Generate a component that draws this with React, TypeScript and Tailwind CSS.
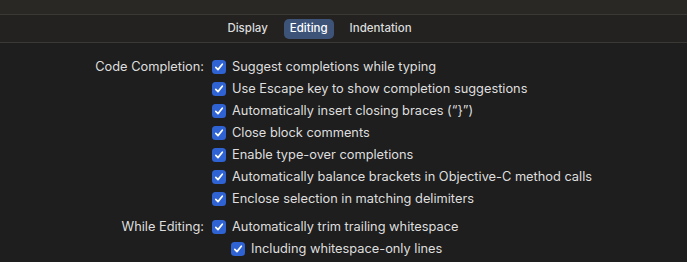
import React from "react";

const Check = () => (
  <div className="w-[14px] h-[14px] rounded-[3.5px] bg-[#2f62d3] flex items-center justify-center shrink-0">
    <svg width="10" height="10" viewBox="0 0 10 10" fill="none">
      <path d="M1.8 5.3 L4 7.6 L8.3 2.2" stroke="white" strokeWidth="1.7" strokeLinecap="round" strokeLinejoin="round" />
    </svg>
  </div>
);

const Row = ({ label, text, indent }: { label?: string; text: string; indent?: boolean }) => (
  <div className="flex items-center h-[22px]">
    <div className="w-[212px] pr-[8px] text-right shrink-0">{label}</div>
    <div className={`flex items-center gap-[6px] ${indent ? "pl-[19px]" : ""}`}>
      <Check />
      <span>{text}</span>
    </div>
  </div>
);

export default function App() {
  return (
    <div
      className="w-[687px] h-[262px] bg-[#1e1e1e] text-[#dedede] text-[12.8px] overflow-hidden"
      style={{ fontFamily: "Inter, 'Helvetica Neue', Arial, sans-serif" }}
    >
      <div className="h-[15px] bg-[#292825] border-b border-[#3a3936]" />
      <div className="h-[28px] bg-[#232220] border-b border-[#3a3936] flex items-center justify-center gap-[10px] pr-[48px] text-[11.5px] font-medium">
        <div className="px-[6px] text-[#dcdcdc]">Display</div>
        <div className="px-[6px] h-[20px] flex items-center rounded-[5px] bg-[#3d5378] text-white">Editing</div>
        <div className="px-[6px] text-[#dcdcdc]">Indentation</div>
      </div>
      <div className="pt-[13px]">
        <Row label="Code Completion:" text="Suggest completions while typing" />
        <Row text="Use Escape key to show completion suggestions" />
        <Row text={"Automatically insert closing braces (\u201C}\u201D)"} />
        <Row text="Close block comments" />
        <Row text="Enable type-over completions" />
        <Row text="Automatically balance brackets in Objective-C method calls" />
        <Row text="Enclose selection in matching delimiters" />
        <div className="h-[6px]" />
        <Row label="While Editing:" text="Automatically trim trailing whitespace" />
        <Row text="Including whitespace-only lines" indent />
      </div>
    </div>
  );
}
